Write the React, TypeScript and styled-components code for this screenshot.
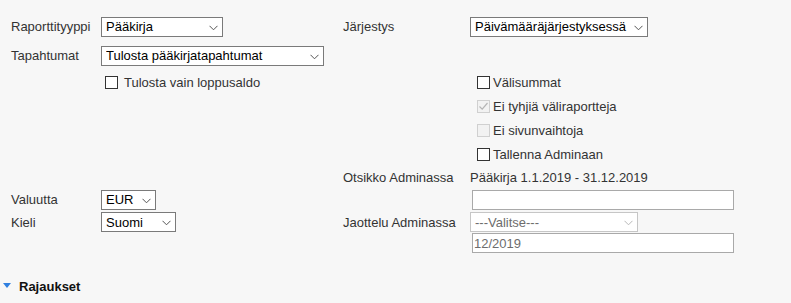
import React from 'react';
import styled, { createGlobalStyle } from 'styled-components';

const GlobalStyle = createGlobalStyle`
  html, body {
    margin: 0;
    padding: 0;
    background: #f7f7f7;
  }
  body {
    font-family: 'Liberation Sans', Arial, sans-serif;
    font-size: 13px;
    color: #333;
  }
`;

const Chevron: React.FC<{ disabled?: boolean }> = ({ disabled }) => (
  <ChevronIcon width="9" height="6" viewBox="0 0 9 6">
    <path
      d="M0.5 0.8 L4.5 4.8 L8.5 0.8"
      fill="none"
      stroke={disabled ? '#b8b8b8' : '#555'}
      strokeWidth="1"
    />
  </ChevronIcon>
);

interface SelectProps {
  value: string;
  width: number;
  disabled?: boolean;
}

const Select: React.FC<SelectProps> = ({ value, width, disabled }) => (
  <SelectWrap $width={width}>
    <SelectInput value={value} disabled={disabled} onChange={() => undefined} $disabled={disabled}>
      <option>{value}</option>
    </SelectInput>
    <Chevron disabled={disabled} />
  </SelectWrap>
);

interface CheckProps {
  label: string;
  checked?: boolean;
  disabled?: boolean;
  gap?: number;
}

const Check: React.FC<CheckProps> = ({ label, checked, disabled, gap = 3 }) => (
  <CheckLabel $gap={gap}>
    <Box $disabled={disabled}>
      {checked && (
        <svg width="11" height="11" viewBox="0 0 11 11">
          <path d="M1.5 5.5 L4.2 8.2 L9.5 2" fill="none" stroke="#b5b5b5" strokeWidth="1.2" />
        </svg>
      )}
    </Box>
    <span>{label}</span>
  </CheckLabel>
);

export default function App() {
  return (
    <>
      <GlobalStyle />
      <Page>
        <Form>
          <Label>Raporttityyppi</Label>
          <Cell>
            <Select value="Pääkirja" width={122} />
          </Cell>
          <Label>Järjestys</Label>
          <Cell>
            <Select value="Päivämääräjärjestyksessä" width={178} />
          </Cell>

          <Label>Tapahtumat</Label>
          <Cell $span={3}>
            <Select value="Tulosta pääkirjatapahtumat" width={223} />
          </Cell>

          <Empty />
          <Cell $indent={4}>
            <Check label="Tulosta vain loppusaldo" gap={6} />
          </Cell>
          <Empty />
          <Cell $indent={7}>
            <Check label="Välisummat" />
          </Cell>

          <Empty $span={3} />
          <Cell $indent={7}>
            <Check label="Ei tyhjiä väliraportteja" checked disabled />
          </Cell>

          <Empty $span={3} />
          <Cell $indent={7}>
            <Check label="Ei sivunvaihtoja" disabled />
          </Cell>

          <Empty $span={3} />
          <Cell $indent={7}>
            <Check label="Tallenna Adminaan" />
          </Cell>

          <Empty $span={2} />
          <Label>Otsikko Adminassa</Label>
          <Label>Pääkirja 1.1.2019 - 31.12.2019</Label>

          <Label>Valuutta</Label>
          <Cell>
            <Select value="EUR" width={55} />
          </Cell>
          <Empty />
          <Cell $indent={2}>
            <TextInput />
          </Cell>

          <Label>Kieli</Label>
          <Cell>
            <Select value="Suomi" width={75} />
          </Cell>
          <Label>Jaottelu Adminassa</Label>
          <Cell>
            <Select value="---Valitse---" width={168} disabled />
          </Cell>

          <Empty $span={3} />
          <Cell $indent={2}>
            <TextInput value="12/2019" disabled readOnly />
          </Cell>
        </Form>

        <SectionHeader>
          <Triangle />
          Rajaukset
        </SectionHeader>
      </Page>
    </>
  );
}

const Page = styled.div`
  width: 791px;
  height: 303px;
  padding-top: 12px;
  box-sizing: border-box;
  background: #f7f7f7;
`;

const Form = styled.div`
  display: grid;
  grid-template-columns: 90px 242px 127px 1fr;
  grid-template-rows: 29px 29px 24px 24px 24px 24px 22px 23px 22px 20px;
  padding-left: 11px;
`;

const Label = styled.div`
  display: flex;
  align-items: center;
  color: #333;
  white-space: nowrap;
`;

const Cell = styled.div<{ $span?: number; $indent?: number }>`
  display: flex;
  align-items: center;
  padding-left: ${(p) => p.$indent ?? 0}px;
  grid-column: span ${(p) => p.$span ?? 1};
`;

const Empty = styled.div<{ $span?: number }>`
  grid-column: span ${(p) => p.$span ?? 1};
`;

const SelectWrap = styled.div<{ $width: number }>`
  position: relative;
  width: ${(p) => p.$width}px;
  height: 20px;
`;

const SelectInput = styled.select<{ $disabled?: boolean }>`
  appearance: none;
  -webkit-appearance: none;
  width: 100%;
  height: 100%;
  margin: 0;
  box-sizing: border-box;
  border: 1px solid ${(p) => (p.$disabled ? '#c6c6c6' : '#7a7a7a')};
  border-radius: 0;
  background: #fff;
  padding: 0 18px 0 4px;
  font-family: 'Liberation Sans', Arial, sans-serif;
  font-size: 13px;
  color: ${(p) => (p.$disabled ? '#6d6d6d' : '#000')};
  opacity: 1;
  outline: none;
`;

const ChevronIcon = styled.svg`
  position: absolute;
  right: 5px;
  top: 8px;
  pointer-events: none;
`;

const TextInput = styled.input`
  width: 262px;
  height: 20px;
  box-sizing: border-box;
  margin: 0;
  border: 1px solid #a9a9a9;
  border-radius: 0;
  background: #fff;
  padding: 0 1px;
  font-family: 'Liberation Sans', Arial, sans-serif;
  font-size: 13px;
  color: #6d6d6d;
  outline: none;

  &:disabled {
    background: #fff;
    color: #6d6d6d;
  }
`;

const CheckLabel = styled.label<{ $gap: number }>`
  display: flex;
  align-items: center;
  gap: ${(p) => p.$gap}px;
  color: #333;
`;

const Box = styled.span<{ $disabled?: boolean }>`
  display: flex;
  align-items: center;
  justify-content: center;
  width: 13px;
  height: 13px;
  box-sizing: border-box;
  border: 1px solid ${(p) => (p.$disabled ? '#d0d0d0' : '#333')};
  background: ${(p) => (p.$disabled ? '#f2f2f2' : '#fff')};
`;

const SectionHeader = styled.div`
  display: flex;
  align-items: center;
  gap: 8px;
  margin-top: 26px;
  padding-left: 3px;
  font-weight: bold;
  font-size: 13px;
  color: #111;
`;

const Triangle = styled.span`
  width: 0;
  height: 0;
  border-left: 4.5px solid transparent;
  border-right: 4.5px solid transparent;
  border-top: 5px solid #2f7fe0;
  margin-top: -2px;
`;
